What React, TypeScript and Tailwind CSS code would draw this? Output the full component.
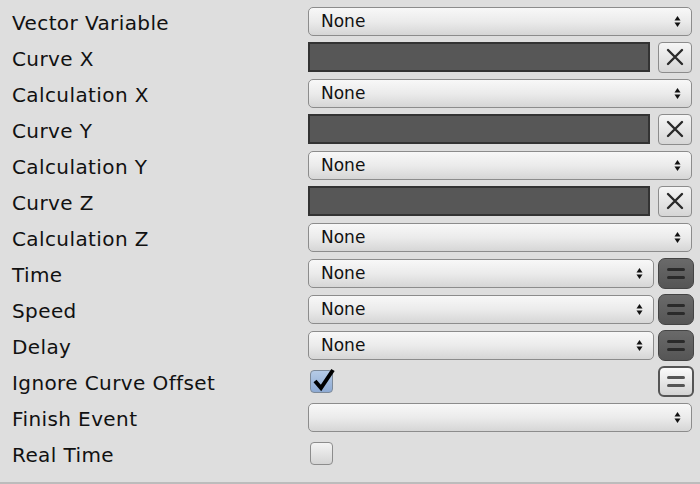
import React from "react";

type Kind = "select" | "curve" | "selectEq" | "check";

interface Row {
  label: string;
  kind: Kind;
  value?: string;
  checked?: boolean;
  eqLight?: boolean;
}

const rows: Row[] = [
  { label: "Vector Variable", kind: "select", value: "None" },
  { label: "Curve X", kind: "curve" },
  { label: "Calculation X", kind: "select", value: "None" },
  { label: "Curve Y", kind: "curve" },
  { label: "Calculation Y", kind: "select", value: "None" },
  { label: "Curve Z", kind: "curve" },
  { label: "Calculation Z", kind: "select", value: "None" },
  { label: "Time", kind: "selectEq", value: "None" },
  { label: "Speed", kind: "selectEq", value: "None" },
  { label: "Delay", kind: "selectEq", value: "None" },
  { label: "Ignore Curve Offset", kind: "check", checked: true, eqLight: true },
  { label: "Finish Event", kind: "select", value: "" },
  { label: "Real Time", kind: "check", checked: false },
];

function Arrows() {
  return (
    <svg width="7" height="13" viewBox="0 0 7 13" className="shrink-0">
      <path d="M3.5 1 L6.5 5.5 L0.5 5.5 Z" fill="#111" />
      <path d="M3.5 12 L6.5 7.5 L0.5 7.5 Z" fill="#111" />
    </svg>
  );
}

function Select({ value }: { value?: string }) {
  return (
    <div className="flex-1 h-[29px] rounded-[5px] border border-[#8c8c8c] bg-gradient-to-b from-[#f8f8f8] via-[#ebebeb] to-[#d6d6d6] flex items-center pl-[12px] pr-[10px]">
      <span className="flex-1 text-[17px] text-[#111] leading-none pt-[1px]">{value}</span>
      <Arrows />
    </div>
  );
}

function EqButton({ light }: { light?: boolean }) {
  return (
    <div
      className={
        light
          ? "w-[36px] h-[31px] rounded-[6px] border-2 border-[#555] bg-gradient-to-b from-[#fafafa] to-[#d4d4d4] flex flex-col items-center justify-center gap-[5px]"
          : "w-[36px] h-[31px] rounded-[7px] border border-[#444] bg-gradient-to-b from-[#6a6a6a] to-[#555] flex flex-col items-center justify-center gap-[5px]"
      }
    >
      <div className={light ? "w-[18px] h-[3px] rounded-full bg-[#555]" : "w-[18px] h-[3px] rounded-full bg-[#2a2a2a]"} />
      <div className={light ? "w-[18px] h-[3px] rounded-full bg-[#555]" : "w-[18px] h-[3px] rounded-full bg-[#2a2a2a]"} />
    </div>
  );
}

function Checkbox({ checked }: { checked?: boolean }) {
  return (
    <div
      className={
        checked
          ? "relative w-[23px] h-[23px] rounded-[4px] border border-[#7d8a99] bg-gradient-to-b from-[#b5cbe6] to-[#8eaad3]"
          : "w-[23px] h-[23px] rounded-[4px] border border-[#8c8c8c] bg-gradient-to-b from-[#f4f4f4] to-[#d4d4d4]"
      }
    >
      {checked && (
        <svg width="26" height="24" viewBox="0 0 26 24" className="absolute left-[1px] top-[-3px]">
          <path d="M3 13 L9 20 L21 2" fill="none" stroke="#000" strokeWidth="4" strokeLinejoin="miter" />
        </svg>
      )}
    </div>
  );
}

function Control({ row }: { row: Row }) {
  switch (row.kind) {
    case "select":
      return (
        <div className="flex items-center pr-[8px]">
          <Select value={row.value} />
        </div>
      );
    case "curve":
      return (
        <div className="flex items-center gap-[8px] pr-[8px]">
          <div className="flex-1 h-[30px] border-2 border-[#333] bg-[#575757]" />
          <div className="w-[34px] h-[31px] rounded-[4px] border border-[#8c8c8c] bg-gradient-to-b from-[#f6f6f6] to-[#d6d6d6] flex items-center justify-center">
            <svg width="20" height="20" viewBox="0 0 20 20">
              <path d="M3 3 L17 17 M17 3 L3 17" stroke="#2a2a2a" strokeWidth="2.4" strokeLinecap="round" />
            </svg>
          </div>
        </div>
      );
    case "selectEq":
      return (
        <div className="flex items-center gap-[4px] pr-[6px]">
          <Select value={row.value} />
          <EqButton />
        </div>
      );
    case "check":
      return (
        <div className="flex items-center justify-between pl-[2px] pr-[6px]">
          <Checkbox checked={row.checked} />
          {row.eqLight && <EqButton light />}
        </div>
      );
  }
}

export default function App() {
  return (
    <div className="w-[700px] h-[484px] bg-[#dedede] flex flex-col overflow-hidden font-['DejaVu_Sans',sans-serif]">
      <div className="flex-1 flex flex-col pt-[3px]">
        {rows.map((row) => (
          <div key={row.label} className="h-[36px] grid grid-cols-[308px_1fr] items-center">
            <span className="pl-[12px] pt-[3px] text-[20px] tracking-[0.4px] text-[#111] leading-none">{row.label}</span>
            <Control row={row} />
          </div>
        ))}
      </div>
      <div className="h-[2px] bg-[#bcbcbc]" />
    </div>
  );
}
